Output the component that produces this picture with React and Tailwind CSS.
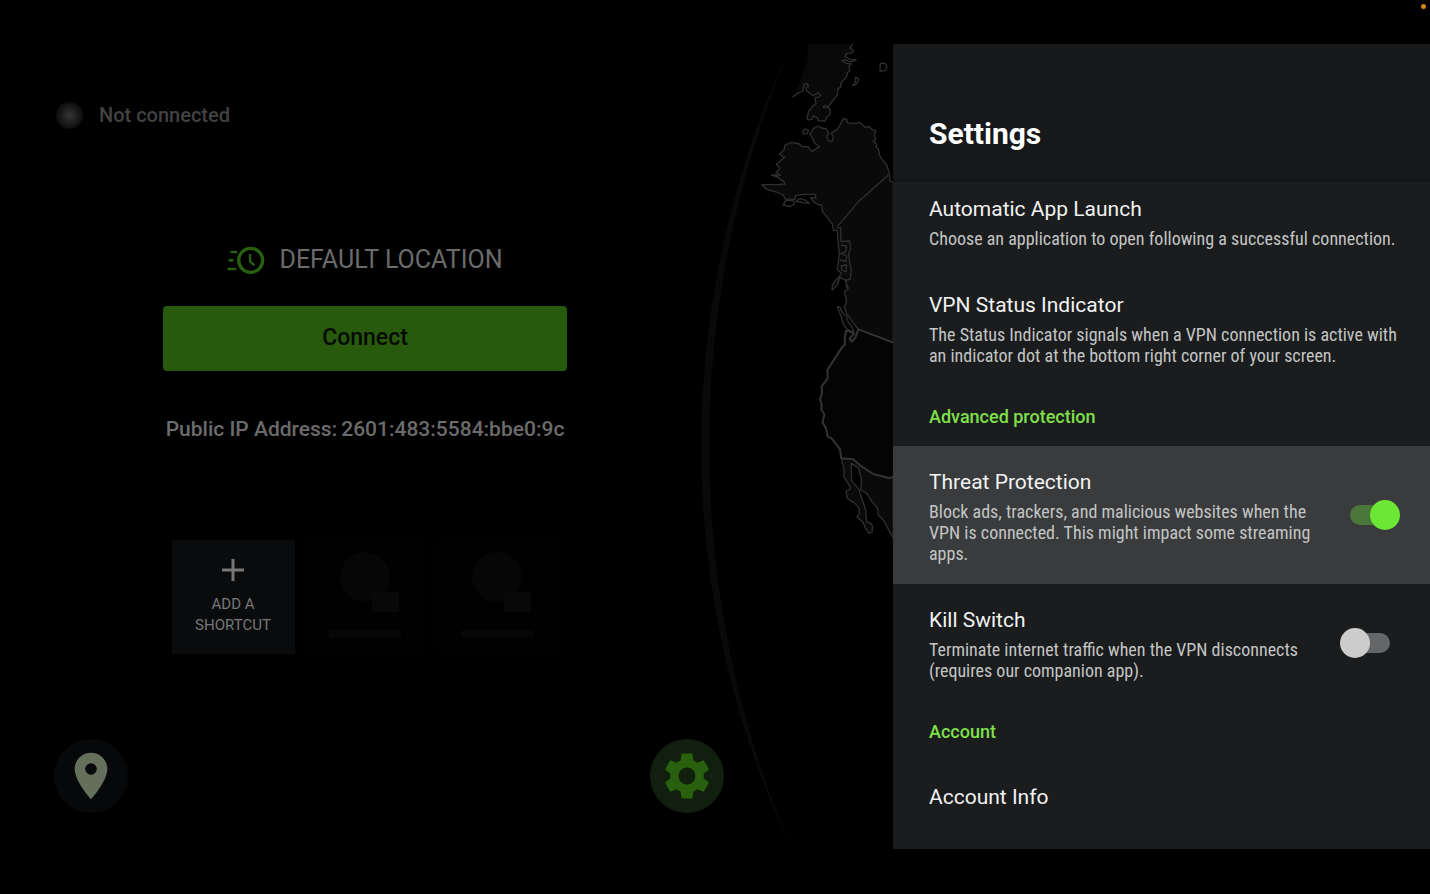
import { useState } from "react";
import { MdPlace, MdSettings } from "react-icons/md";

const placeholders = ["first", "second"];

function GlobeMap() {
  return (
    <svg
      aria-hidden="true"
      className="h-full w-[200px] justify-self-end [grid-area:1/1]"
      preserveAspectRatio="xMaxYMin slice"
      strokeLinejoin="round"
      viewBox="-171 12 600 2415"
    >
      {/* rim of the globe */}
      <path
        d="M123 15A2829 2829 0 0 0 123 2424A3078 3078 0 0 1 123 15Z"
        fill="#090909"
      />

      {/* eastern Siberia */}
      <path
        d="M173 12V60L140 150L160 150L163 132L172 133L168 150L182 162L205 160L212 168L195 175L197 192L180 208L172 235L185 240L190 225L205 235L225 243L240 225L238 205L222 200L240 195L262 160L270 135L290 110L302 75L275 62L300 58L285 50L290 40L308 38L300 25L305 12Z"
        fill="#090909"
      />
      <path
        d="M127 172L142 160L158 153L163 132L173 132L175 140L167 142L168 150L182 162L190 167L205 158L212 166L205 172L195 172L198 192L186 200L176 214L171 237L178 240L188 236L190 227L205 235L204 242L225 243L231 230L240 225L241 210L235 203L220 202L224 196L236 200L244 187L262 165L264 147L273 140L272 130L290 110L292 98L299 92L297 80L303 72L290 70L275 62L290 60L300 66L318 60L302 58L284 50L290 40L308 38L309 30L300 25L308 12"
        fill="none"
        stroke="#2f2f2f"
        strokeWidth="4"
      />
      <path
        d="M317 112L326 117L320 132L308 137L316 126ZM391 70L405 70L411 80L406 92L390 93ZM158 274L166 267L175 271L172 281L160 282Z"
        fill="none"
        stroke="#2f2f2f"
        strokeWidth="4"
      />

      {/* Alaska and Canada */}
      <path
        d="M430 425H420L418 400L410 375L396 358L388 345L386 328L378 322L380 312L370 305L377 298L373 286L377 272L365 268L358 260L345 262L330 248L310 250L292 248L290 238L280 236L270 255L262 268L243 280L250 290L246 305L238 303L230 292L236 280L228 266L214 264L205 258L190 266L180 282L189 297L192 308L208 320L185 335L174 320L155 320L148 312L125 307L105 315L102 330L88 342L104 352L92 362L79 372L90 385L78 398L92 405L65 405L84 411L90 418L102 425L105 432L85 434L36 434L50 448L80 456L100 465L105 477L135 478L136 467L160 463L196 463L198 474L182 473L190 485L206 495L215 493L218 515L230 530L247 552L250 570L262 572L264 605L268 640L262 690L275 700L262 715L247 735L246 750L262 735L270 712L285 720L295 745L283 755L290 785L283 800L290 820L300 835L325 868L430 908Z"
        fill="#0a0a0a"
        stroke="#2f2f2f"
        strokeWidth="4"
      />
      <path
        d="M415 405L328 482L262 560M262 565L272 563L273 605L299 603L302 625L296 642L298 665L304 690L300 718L288 720L290 745M272 615L290 618L286 636L272 640L290 648L288 664L270 660M274 678L290 675L288 696L276 690ZM100 495L106 482L130 482L134 492L120 500ZM138 484L150 475L168 482L178 490L160 488L150 486Z"
        fill="none"
        stroke="#2f2f2f"
        strokeWidth="4"
      />
      <path
        d="M262 800L270 801L276 817L290 828L292 842L300 852L312 873L300 874L282 858L275 835Z"
        fill="#050505"
        stroke="#2f2f2f"
        strokeWidth="4"
      />

      {/* Mexico */}
      <path
        d="M274 1255L282 1285L282 1310L300 1340L300 1348L288 1353L292 1375L312 1388L328 1405L328 1422L321 1430L340 1448L345 1462L357 1480L366 1476L368 1460L362 1450L350 1446L347 1410L325 1345L305 1322L303 1270L325 1283L335 1320L332 1350L350 1360L365 1384L383 1405L385 1425L400 1440L430 1495V1310L310 1258Z"
        fill="#0a0a0a"
        stroke="#2f2f2f"
        strokeWidth="4"
      />

      {/* United States */}
      <path
        d="M430 908L325 868L316 892L306 905L299 897L312 880L306 876L288 872L284 895L285 915L278 919L232 990L233 1015L215 1040L216 1060L210 1078L215 1095L214 1110L223 1122L218 1148L228 1165L233 1190L245 1195L270 1228L274 1255L310 1258L330 1276L370 1302L420 1315L430 1310"
        fill="#040404"
        stroke="#343434"
        strokeWidth="6"
      />
    </svg>
  );
}

function RecentLocationIcon() {
  return (
    <svg
      aria-hidden="true"
      className="h-[29px] w-10 shrink-0"
      fill="none"
      stroke="#28600d"
      strokeLinecap="round"
      viewBox="233 46 120 87"
    >
      <circle cx="304" cy="89" r="36" strokeWidth="10" />
      <path d="M302 73V92L313 102" strokeLinejoin="round" strokeWidth="7" />
      <path d="M247 64H260M241 89H249M238 115H257" strokeWidth="8" />
    </svg>
  );
}

function ShortcutPlaceholder() {
  return (
    <li className="flex h-[114px] w-[123px] flex-col items-center bg-[#010101] pt-3">
      <div className="relative size-[50px] rounded-full bg-[#060606]">
        <span className="absolute top-10 left-8 h-5 w-[27px] bg-[#080808]" />
      </div>
      <span className="mt-7 h-[7px] w-[72px] bg-[#060606]" />
    </li>
  );
}

function Home() {
  return (
    <div className="flex max-w-[730px] flex-col pt-[56px] pb-9 [grid-area:1/1]">
      <p className="flex items-center gap-4 pl-14 text-xl leading-[30px] font-medium text-[#424242]">
        <span className="size-[27px] rounded-full bg-radial from-[#363636] to-[#0d0d0d] to-70%" />
        Not connected
      </p>

      <div className="mt-[112px] flex flex-col items-center">
        <h2 className="flex items-center gap-3 text-[25px] leading-9 text-[#6b6b6b]">
          <RecentLocationIcon />
          DEFAULT LOCATION
        </h2>
        <button
          className="mt-7 h-[65px] w-[404px] rounded bg-[#285a0d] text-[23px] font-medium text-[#050a03]"
          type="button"
        >
          Connect
        </button>
        <p className="mt-11 flex gap-1 text-[21px] leading-7 font-medium whitespace-nowrap text-[#6b6b6b]">
          <span>Public IP Address:</span>
          <span>2601:483:5584:bbe0:9c</span>
        </p>
        <ul className="mt-[97px] flex gap-[9px]">
          <li>
            <button
              className="flex h-[114px] w-[123px] flex-col items-center bg-[#0a0b0d] pt-[18px] text-[15px] leading-[21px] text-[#777777]"
              type="button"
            >
              <svg
                aria-hidden="true"
                className="mb-3 size-6"
                stroke="currentColor"
                strokeWidth="3"
                viewBox="0 0 24 24"
              >
                <path d="M12 1V23M1 12H23" />
              </svg>
              <span>ADD A</span>
              <span>SHORTCUT</span>
            </button>
          </li>
          {placeholders.map((name) => (
            <ShortcutPlaceholder key={name} />
          ))}
        </ul>
      </div>

      <nav className="mt-auto flex justify-between pr-1.5 pl-[54px]">
        <button
          aria-label="Locations"
          className="grid size-[74px] place-items-center rounded-full bg-[#07080a] text-[#646f5c]"
          type="button"
        >
          <MdPlace size={56} />
        </button>
        <button
          aria-label="Settings"
          className="grid size-[74px] place-items-center rounded-full bg-[#101f0e] text-[#28600d]"
          type="button"
        >
          <MdSettings size={56} />
        </button>
      </nav>
    </div>
  );
}

function SettingText({ title, children }) {
  return (
    <span className="block flex-1">
      <span className="block text-[21px] leading-8 text-[#f2f2f2]">{title}</span>
      {children ? (
        <span className="mt-[3px] block font-['Roboto_Condensed',Roboto,sans-serif] text-lg leading-[21px] text-[#c4c5c5]">
          {children}
        </span>
      ) : null}
    </span>
  );
}

function SettingLink({ title, children }) {
  return (
    <button className="flex w-full py-5 pr-5 pl-9 text-left" type="button">
      <SettingText title={title}>{children}</SettingText>
    </button>
  );
}

function SettingSwitch({ title, active, defaultChecked, children }) {
  const [checked, setChecked] = useState(defaultChecked);

  return (
    <label
      className={`flex items-center gap-5 py-5 pr-[30px] pl-9 ${
        active ? "bg-[#393b3c]" : ""
      }`}
    >
      <SettingText title={title}>{children}</SettingText>
      <input
        checked={checked}
        className="relative h-[30px] w-[60px] shrink-0 appearance-none before:absolute before:top-[5px] before:left-2.5 before:h-5 before:w-10 before:rounded-full before:bg-[#646667] after:absolute after:top-0 after:left-0 after:size-[30px] after:rounded-full after:bg-[#cccccc] checked:before:bg-[#49783a] checked:after:left-[30px] checked:after:bg-[#6ce733]"
        onChange={(event) => setChecked(event.target.checked)}
        type="checkbox"
      />
    </label>
  );
}

function SettingsGroup({ children }) {
  return (
    <h2 className="flex h-[60px] items-center pt-0.5 pl-9 text-lg font-medium text-[#7fe04b]">
      {children}
    </h2>
  );
}

function SettingsPanel() {
  return (
    <aside className="flex w-[537px] shrink-0 flex-col overflow-hidden bg-[#1a1c1d]">
      <header className="z-10 border-b-2 border-[#111314] bg-[#16181a] pt-[68px] pb-6 pl-9">
        <h1 className="text-3xl leading-[44px] font-bold text-white">Settings</h1>
      </header>
      {/* the list is scrolled a little way under the header */}
      <div className="-mt-[9px]">
        <SettingLink title="Automatic App Launch">
          Choose an application to open following a successful connection.
        </SettingLink>
        <SettingLink title="VPN Status Indicator">
          The Status Indicator signals when a VPN connection is active with an
          indicator dot at the bottom right corner of your screen.
        </SettingLink>
        <SettingsGroup>Advanced protection</SettingsGroup>
        <SettingSwitch active defaultChecked title="Threat Protection">
          Block ads, trackers, and malicious websites when the VPN is connected.
          This might impact some streaming apps.
        </SettingSwitch>
        <SettingSwitch defaultChecked={false} title="Kill Switch">
          Terminate internet traffic when the VPN disconnects (requires our
          companion app).
        </SettingSwitch>
        <SettingsGroup>Account</SettingsGroup>
        <SettingLink title="Account Info" />
      </div>
    </aside>
  );
}

export default function App() {
  return (
    <div className="flex min-h-screen flex-col bg-black pb-[45px] font-[Roboto,sans-serif]">
      <div className="flex h-11 justify-end pt-1 pr-1">
        <span className="size-[5px] rounded-full bg-[#d98512]" />
      </div>
      <main className="flex flex-1">
        <div className="grid flex-1">
          <GlobeMap />
          <Home />
        </div>
        <SettingsPanel />
      </main>
    </div>
  );
}
